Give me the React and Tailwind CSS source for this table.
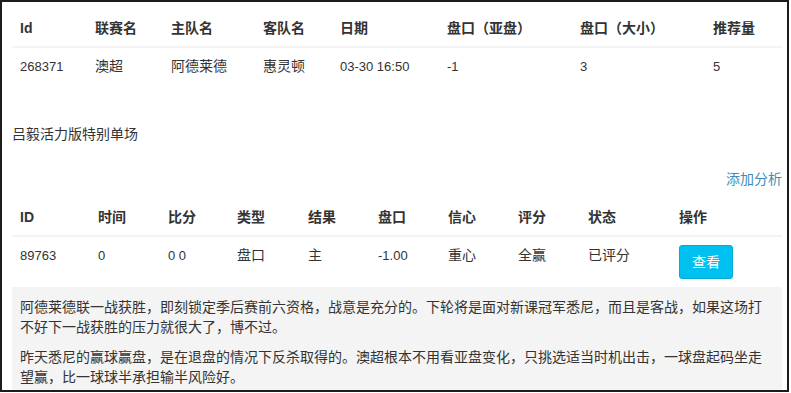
import React from "react";

const matchCols = [
  { label: "Id", w: "w-[75px]" },
  { label: "联赛名", w: "w-[76px]" },
  { label: "主队名", w: "w-[92px]" },
  { label: "客队名", w: "w-[77px]" },
  { label: "日期", w: "w-[107px]" },
  { label: "盘口（亚盘）", w: "w-[133px]" },
  { label: "盘口（大小）", w: "w-[133px]" },
  { label: "推荐量", w: "w-[77px]" },
];

const matchRow = [
  { v: "268371", num: true },
  { v: "澳超" },
  { v: "阿德莱德" },
  { v: "惠灵顿" },
  { v: "03-30 16:50", num: true },
  { v: "-1", num: true },
  { v: "3", num: true },
  { v: "5", num: true },
];

const tipCols = [
  { label: "ID", w: "w-[78px]" },
  { label: "时间", w: "w-[70px]" },
  { label: "比分", w: "w-[69px]" },
  { label: "类型", w: "w-[71px]" },
  { label: "结果", w: "w-[70px]" },
  { label: "盘口", w: "w-[70px]" },
  { label: "信心", w: "w-[70px]" },
  { label: "评分", w: "w-[70px]" },
  { label: "状态", w: "w-[91px]" },
  { label: "操作", w: "w-[111px]" },
];

const tipRow = [
  { v: "89763", num: true },
  { v: "0", num: true },
  { v: "0 0", num: true },
  { v: "盘口" },
  { v: "主" },
  { v: "-1.00", num: true },
  { v: "重心" },
  { v: "全赢" },
  { v: "已评分" },
];

function Th({ children, w }) {
  return (
    <th
      className={`${w} px-2 py-2 text-left align-bottom font-bold leading-5 border-b-2 border-[#f4f4f4]`}
    >
      {children}
    </th>
  );
}

function Td({ cell }) {
  return (
    <td className="px-2 py-2 align-top leading-5 border-t border-[#f4f4f4]">
      <span className={cell.num ? "text-[13px]" : ""}>{cell.v}</span>
    </td>
  );
}

export default function App() {
  return (
    <div className="w-[789px] h-[392px] overflow-hidden border-2 border-[#1c1c1c] bg-white pt-2 pl-[10px] pr-[5px] text-[14px] text-[#333] font-['Liberation_Sans','Noto_Sans_CJK_SC',sans-serif]">
      <table className="w-[770px] table-fixed border-collapse">
        <thead>
          <tr>
            {matchCols.map((c) => (
              <Th key={c.label} w={c.w}>
                {c.label}
              </Th>
            ))}
          </tr>
        </thead>
        <tbody>
          <tr>
            {matchRow.map((c, i) => (
              <Td key={i} cell={c} />
            ))}
          </tr>
        </tbody>
      </table>

      <p className="mt-[39px] leading-5">吕毅活力版特别单场</p>

      <div className="mt-[25px] w-[770px] text-right leading-5">
        <a className="text-[#3c8dbc]">添加分析</a>
      </div>

      <table className="mt-[10px] w-[770px] table-fixed border-collapse">
        <thead>
          <tr>
            {tipCols.map((c) => (
              <Th key={c.label} w={c.w}>
                {c.label}
              </Th>
            ))}
          </tr>
        </thead>
        <tbody>
          <tr>
            {tipRow.map((c, i) => (
              <Td key={i} cell={c} />
            ))}
            <td className="px-2 py-2 align-top border-t border-[#f4f4f4]">
              <button className="rounded-[3px] border border-[#00acd6] bg-[#00c0ef] px-3 py-[6px] leading-5 text-white">
                查看
              </button>
            </td>
          </tr>
        </tbody>
      </table>

      <div className="w-[770px] bg-[#f4f4f4] pt-[10px] pl-2 pr-[10px] pb-3 leading-5">
        <p className="mb-[10px]">
          阿德莱德联一战获胜，即刻锁定季后赛前六资格，战意是充分的。下轮将是面对新课冠军悉尼，而且是客战，如果这场打不好下一战获胜的压力就很大了，博不过。
        </p>
        <p className="mb-[10px]">
          昨天悉尼的赢球赢盘，是在退盘的情况下反杀取得的。澳超根本不用看亚盘变化，只挑选适当时机出击，一球盘起码坐走望赢，比一球球半承担输半风险好。
        </p>
      </div>
    </div>
  );
}
